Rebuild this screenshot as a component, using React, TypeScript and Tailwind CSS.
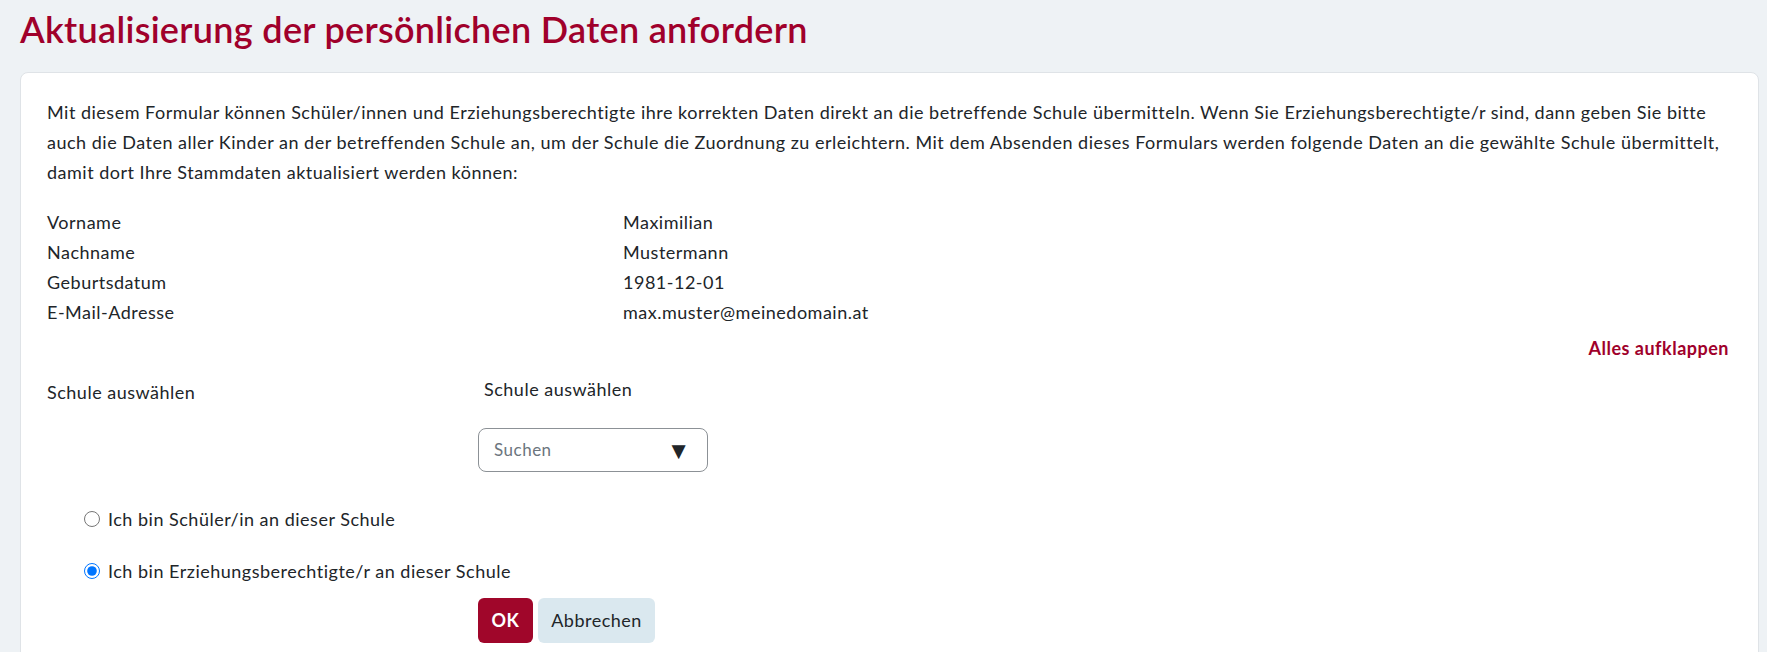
import { useState } from "react";

const daten = [
  ["Vorname", "Maximilian"],
  ["Nachname", "Mustermann"],
  ["Geburtsdatum", "1981-12-01"],
  ["E-Mail-Adresse", "max.muster@meinedomain.at"],
];

export default function App() {
  const [rolle, setRolle] = useState("eltern");

  return (
    <div className="min-h-screen bg-[#eef2f5] font-['Lato','Liberation_Sans',sans-serif] text-[18px] text-[#212529]">
      <h1 className="pl-5 pt-[6px] text-[36px] font-semibold leading-[46px] tracking-[0.3px] text-[#a0002b]">
        Aktualisierung der persönlichen Daten anfordern
      </h1>

      <div className="ml-5 mr-2 mt-[20px] rounded-lg border border-[#dfe3e7] bg-white pb-10 pl-[26px] pr-[29px] pt-[24px] tracking-[0.5px]">
        {/* Intro */}
        <p className="leading-[30px]">
          Mit diesem Formular können Schüler/innen und Erziehungsberechtigte ihre korrekten Daten direkt an die betreffende Schule übermitteln. Wenn Sie Erziehungsberechtigte/r sind, dann geben Sie bitte
          <br />
          auch die Daten aller Kinder an der betreffenden Schule an, um der Schule die Zuordnung zu erleichtern. Mit dem Absenden dieses Formulars werden folgende Daten an die gewählte Schule übermittelt,
          <br />
          damit dort Ihre Stammdaten aktualisiert werden können:
        </p>

        {/* Stammdaten */}
        <div className="mt-5 leading-[30px]">
          {daten.map(([label, wert]) => (
            <div key={label} className="flex">
              <div className="w-[576px]">{label}</div>
              <div>{wert}</div>
            </div>
          ))}
        </div>

        <div className="mt-[6px] flex justify-end leading-[30px]">
          <button className="font-bold tracking-[0.5px] text-[#a0002b]">Alles aufklappen</button>
        </div>

        {/* Schule */}
        <div className="mt-[11px] flex leading-[30px]">
          <div className="w-[431px] pt-[3px]">Schule auswählen</div>
          <div>
            <div className="pl-[6px]">Schule auswählen</div>
            <div className="mt-[24px] flex h-[44px] w-[230px] items-center justify-between rounded-lg border border-[#8c9196] pl-[15px] pr-[16px]">
              <span className="text-[17px] text-[#6c757d]">Suchen</span>
              <span className="text-[24px] leading-none text-[#212529]">▼</span>
            </div>
          </div>
        </div>

        <div className="mt-[32px] pl-[37px] leading-[30px]">
          <label className="flex items-center gap-[8px]">
            <input
              type="radio"
              name="rolle"
              className="m-0 h-4 w-4"
              checked={rolle === "schueler"}
              onChange={() => setRolle("schueler")}
            />
            Ich bin Schüler/in an dieser Schule
          </label>
          <label className="mt-[22px] flex items-center gap-[8px]">
            <input
              type="radio"
              name="rolle"
              className="m-0 h-4 w-4"
              checked={rolle === "eltern"}
              onChange={() => setRolle("eltern")}
            />
            Ich bin Erziehungsberechtigte/r an dieser Schule
          </label>
        </div>

        <div className="ml-[431px] mt-[12px] flex gap-[5px]">
          <button className="h-[45px] w-[55px] rounded-md bg-[#a0062a] font-bold tracking-[0.5px] text-white">OK</button>
          <button className="h-[45px] w-[117px] rounded-md bg-[#dae8ef] tracking-[0.5px] text-[#212529]">Abbrechen</button>
        </div>
      </div>
    </div>
  );
}
